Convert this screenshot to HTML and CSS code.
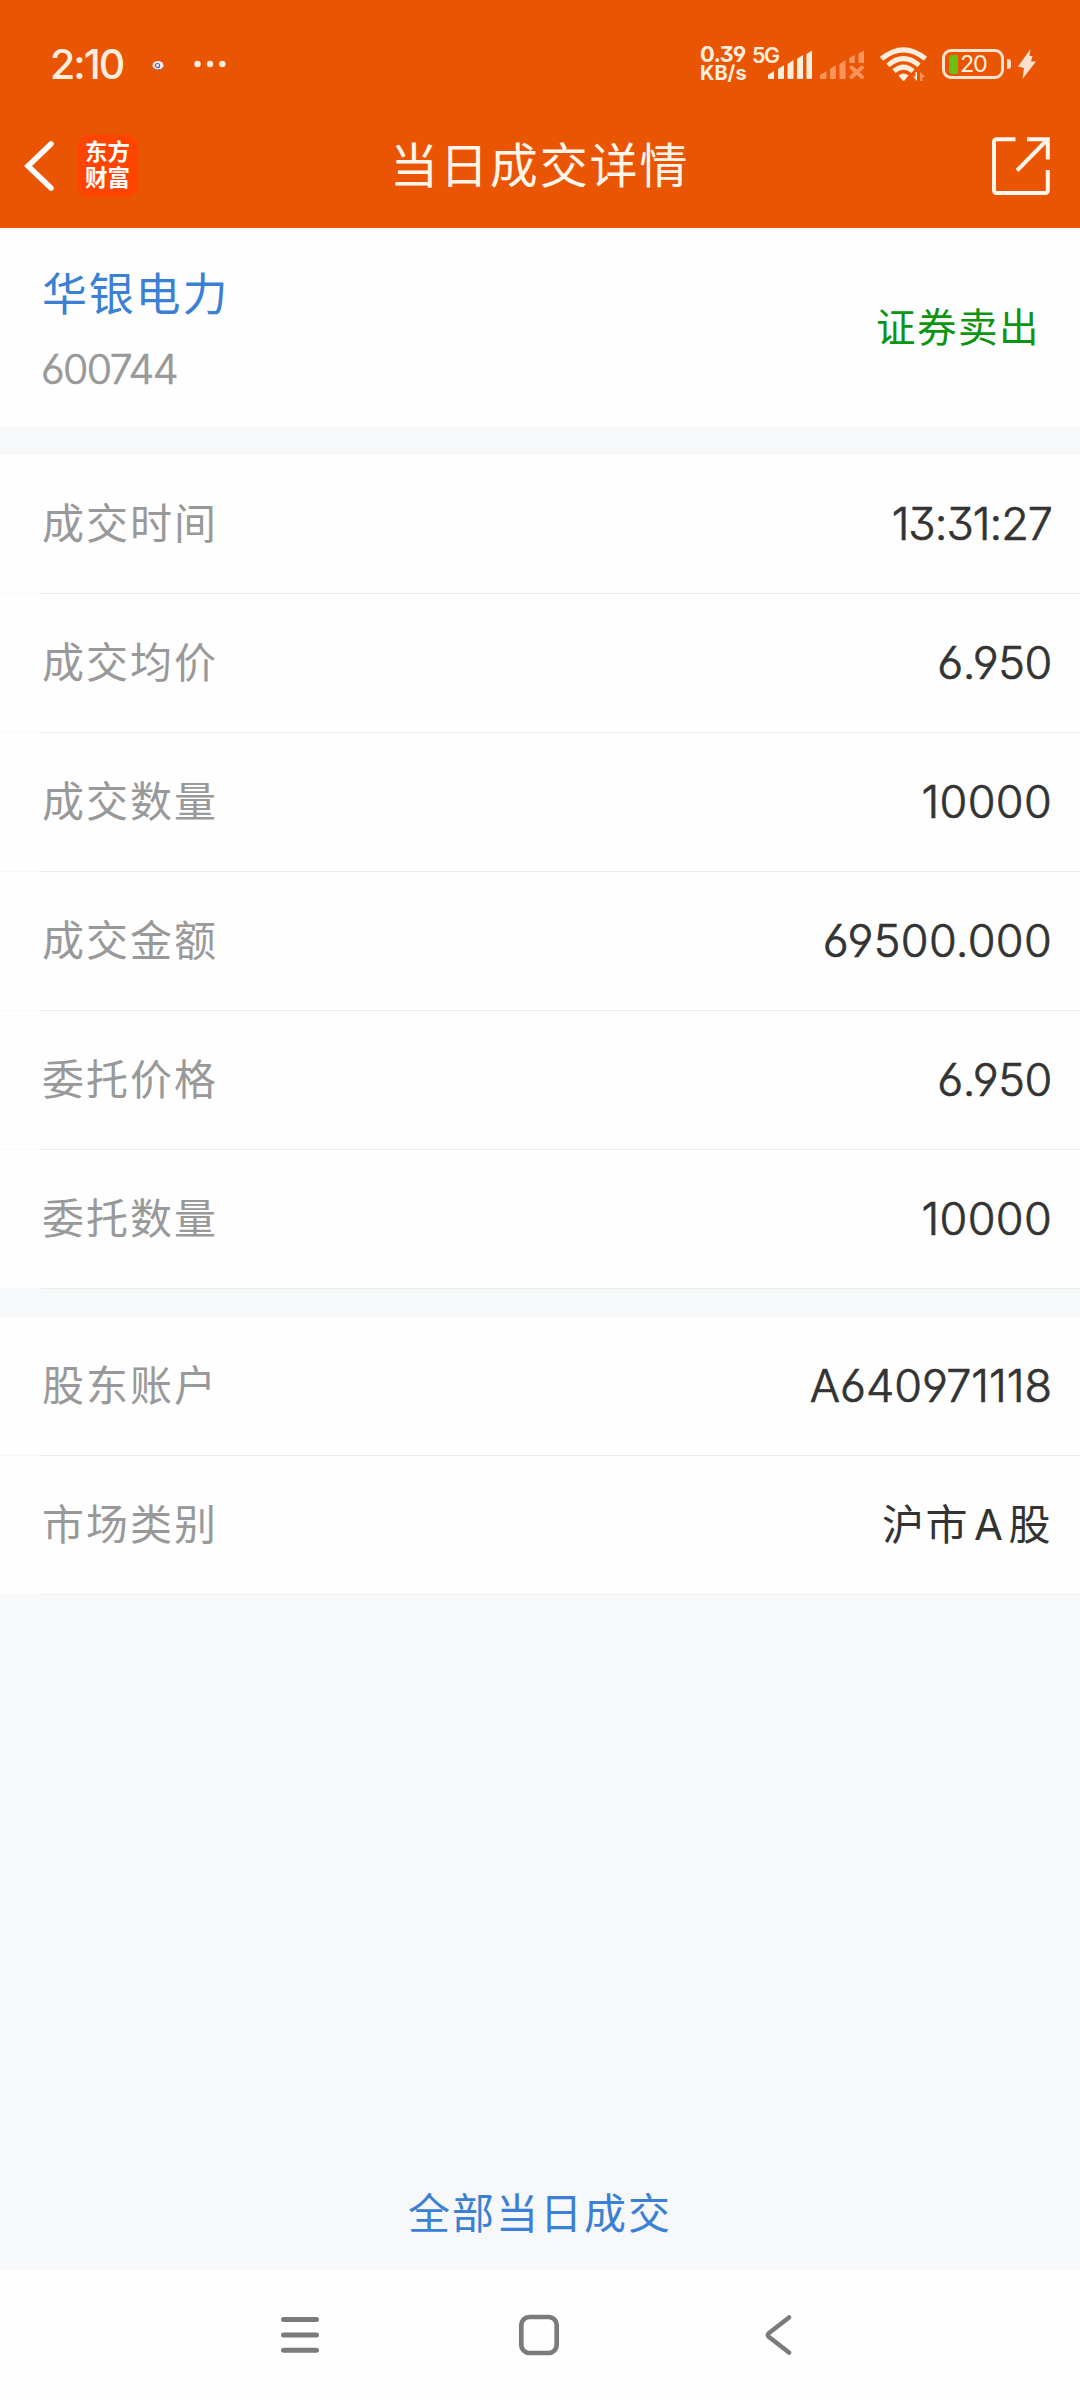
FILE: index.html
```html
<!DOCTYPE html>
<html lang="zh-CN">
<head>
<meta charset="utf-8">
<title>当日成交详情</title>
<link rel="stylesheet" href="styles.css">
</head>
<body>
<div class="screen">
  <header class="top">
    <div class="status">
      <div class="clock">2:10</div>
      <svg class="notif" width="80" height="24" viewBox="0 0 80 24">
        <ellipse cx="9" cy="13.5" rx="5.5" ry="4.5" fill="#efe6ee"/>
        <path d="M4 16q5 4 10 0" fill="none" stroke="#a05a6a" stroke-width="1"/>
        <circle cx="8.5" cy="13.5" r="2" fill="#fff" stroke="#5b5f93" stroke-width="1.2"/>
        <g fill="#ffeedd"><circle cx="48.5" cy="12" r="3.2"/><circle cx="61" cy="12" r="3.2"/><circle cx="73.3" cy="12" r="3.2"/></g>
      </svg>
      <div class="speed"><span class="rate">0.39</span><span class="unit">KB/s</span></div>
      <div class="cell">
        <span class="gen">5G</span>
        <svg width="100" height="36" viewBox="0 0 100 36">
          <g fill="#ffeedd">
            <path d="M0 32v-3l6-4v7q0 1-1 1h-4q-1 0-1-1z"/>
            <path d="M10 32v-9l6-4v13q0 1-1 1h-4q-1 0-1-1z"/>
            <path d="M19.500 32v-14l6-4v18q0 1-1 1h-4q-1 0-1-1z"/>
            <path d="M29 32v-19l6-4v23q0 1-1 1h-4q-1 0-1-1z"/>
            <path d="M38.500 32v-24l5.500-3.500v27.500q0 1-1 1h-3.500q-1 0-1-1z"/>
          </g>
          <g fill="#ff935c">
            <path d="M52 32v-3l6.500-4v7q0 1-1 1h-4.500q-1 0-1-1z"/>
            <path d="M62 32v-9l6-4v13q0 1-1 1h-4q-1 0-1-1z"/>
            <path d="M71.500 32v-14l6-4v18q0 1-1 1h-4q-1 0-1-1z"/>
            <path d="M81.300 17v-5l5.500-3v8z"/>
            <path d="M90.500 17v-9.500l5.500-3v12.500z"/>
          </g>
          <path d="M83.500 21.500l10.500 9.500M94 21.500l-10.500 9.500" stroke="#ff935c" stroke-width="4" stroke-linecap="round"/>
        </svg>
      </div>
      <svg class="wifi" width="48" height="36" viewBox="0 0 48 36">
        <g fill="none" stroke="#ffeedd" stroke-width="5">
          <path d="M1.500 12.800Q23.500 -5.200 45.500 12.800"/>
          <path d="M8 19.300Q23.500 6 39 19.300"/>
          <path d="M14 25.200Q23.500 17.200 33 25.200"/>
        </g>
        <path d="M18.500 29.500q5-4 10 0l-3.800 4.700q-1.200 1-2.400 0z" fill="#ffeedd"/>
        <path d="M37 26v9l-4-4.500h2.500V26z" fill="#ffeedd"/>
        <path d="M40 35v-9l5.500 5h-3v4z" fill="#ff935c"/>
      </svg>
      <div class="battery"><span class="level"></span><span class="pct">20</span></div>
      <span class="tip"></span>
      <svg class="bolt" width="20" height="32" viewBox="0 0 20 32"><path d="M13.500 1L1 18.500l6 1.500L5.500 31 19 13.500h-5L15.500 8h-3z" fill="#ffe0d0"/></svg>
    </div>
    <div class="bar">
      <svg class="back" width="34" height="54" viewBox="0 0 34 54"><path d="M29 5L6 27l23 22" fill="none" stroke="#fff" stroke-width="5.500" stroke-linecap="round" stroke-linejoin="miter"/></svg>
      <div class="logo"><span>东方</span><span>财富</span></div>
      <h1 class="title">当日成交详情</h1>
      <svg class="share" width="58" height="58" viewBox="0 0 58 58"><g fill="none" stroke="#fff5ea" stroke-width="4"><path d="M23.500 2.200H5q-3 0-3 3V53q0 3 3 3H53q2.800 0 2.800-3V33"/><path d="M35 2.200H55.800V22.500M54.500 3.500L25 33.500"/></g></svg>
    </div>
  </header>

  <section class="stock">
    <div class="id"><div class="name">华银电力</div><div class="code">600744</div></div>
    <div class="side">证券卖出</div>
  </section>

  <section class="group">
    <div class="row"><span class="label">成交时间</span><span class="value time">13:31:27</span></div>
    <div class="row"><span class="label">成交均价</span><span class="value price">6.950</span></div>
    <div class="row"><span class="label">成交数量</span><span class="value">10000</span></div>
    <div class="row"><span class="label">成交金额</span><span class="value">69500.000</span></div>
    <div class="row"><span class="label">委托价格</span><span class="value price">6.950</span></div>
    <div class="row"><span class="label">委托数量</span><span class="value">10000</span></div>
  </section>

  <section class="group">
    <div class="row"><span class="label">股东账户</span><span class="value account">A640971118</span></div>
    <div class="row"><span class="label">市场类别</span><span class="value market">沪市<span class="letter">A</span>股</span></div>
  </section>

  <a class="all">全部当日成交</a>

  <nav class="nav">
    <svg width="40" height="42" viewBox="0 0 40 42"><path d="M3.500 5.500h33M3.500 21h33M3.500 36.300h33" stroke="#7b7b7b" stroke-width="5" stroke-linecap="round"/></svg>
    <svg width="42" height="42" viewBox="0 0 42 42"><rect x="3.300" y="3" width="35.400" height="36" rx="8" fill="none" stroke="#7b7b7b" stroke-width="4.700"/></svg>
    <svg width="28" height="42" viewBox="0 0 28 42"><path d="M25 3.500L5 19q-2.500 2 0 4L25 38.500" fill="none" stroke="#7b7b7b" stroke-width="4.500" stroke-linecap="round"/></svg>
  </nav>
</div>
</body>
</html>
```
FILE: styles.css
```css
* { box-sizing: border-box; }
body {
  margin: 0;
  font-family: Inter, "Noto Sans CJK SC", sans-serif;
  font-feature-settings: "cv03", "cv04", "cv09";
}
svg { display: block; flex: none; }
.screen {
  width: 1080px;
  height: 2400px;
  display: flex;
  flex-direction: column;
  background: #f6f8fa;
  overflow: hidden;
}
.top { height: 228px; background: #ea5504; color: #fff5ea; }

.status {
  height: 104px;
  padding: 24px 42px 0 50px;
  display: flex;
  align-items: center;
  color: #ffeedd;
}
.clock { width: 99px; font-size: 41px; font-weight: 500; line-height: 44px; letter-spacing: -2px; }
.speed {
  margin-left: 471px;
  width: 68px;
  display: flex;
  flex-direction: column;
  align-items: flex-start;
  font-weight: 700;
  white-space: nowrap;
}
.rate { font-size: 22px; line-height: 19px; letter-spacing: -0.800px; }
.unit { font-size: 20px; line-height: 19px; }
.cell { position: relative; width: 112px; }
.gen {
  position: absolute;
  left: -16px;
  top: -1px;
  font-size: 21.500px;
  line-height: 20px;
  font-weight: 600;
  letter-spacing: -1.500px;
}
.wifi { width: 48px; }
.battery {
  margin-left: 14px;
  width: 62px;
  height: 30px;
  border: 3px solid #ffe3cf;
  border-radius: 9px;
  display: flex;
  align-items: center;
  padding-left: 4px;
}
.level { width: 9px; height: 19px; border-radius: 3px 0 0 3px; background: #6abe16; }
.pct { margin-left: 2px; font-size: 23.500px; line-height: 24px; letter-spacing: -1.300px; }
.tip { width: 4px; height: 10px; margin-left: 3px; border-radius: 0 3px 3px 0; background: #ffe3cf; }
.bolt { margin-left: 6px; }

.bar { height: 124px; padding: 0 30px 0 22px; display: flex; align-items: center; }
.logo {
  margin-left: 21px;
  width: 61px;
  height: 62px;
  border-radius: 13px;
  background: #ff4402;
  color: #fff;
  display: flex;
  flex-direction: column;
  align-items: center;
  justify-content: center;
  padding-bottom: 2px;
  font-size: 22.500px;
  font-weight: 700;
  line-height: 26px;
}
.title { flex: 1; margin: 0 0 0 252px; font-size: 48px; font-weight: 400; line-height: 60px; letter-spacing: 1.900px; }

.stock {
  height: 199px;
  padding: 0 40px 0 42px;
  background: #fefefe;
  display: flex;
  justify-content: space-between;
  align-items: center;
}
.id { padding-top: 6px; }
.name { font-size: 45px; line-height: 64px; letter-spacing: 1.800px; color: #3b80d4; }
.code {
  margin: 12px 0 0 -1px;
  font-size: 41px;
  font-weight: 300;
  line-height: 60px;
  letter-spacing: -1.600px;
  color: #999;
  -webkit-text-stroke: 0.700px #999;
}
.side { font-size: 39.500px; line-height: 60px; letter-spacing: 1.500px; color: #0d9410; }

.group { margin-top: 28px; }
.row {
  height: 139px;
  padding: 0 28px 2px 42px;
  display: flex;
  justify-content: space-between;
  align-items: center;
  background: linear-gradient(90deg, #f7f8f9 41px, #ebecec 41px) bottom / 100% 1px no-repeat, #fefefe;
}
.label { font-size: 42px; letter-spacing: 2px; line-height: 60px; color: #999; }
.value {
  font-size: 45px;
  font-weight: 300;
  line-height: 60px;
  letter-spacing: 0.300px;
  color: #333;
  -webkit-text-stroke: 0.700px #333;
}
.time { letter-spacing: -1px; }
.price { letter-spacing: -0.400px; }
.account { letter-spacing: 0; }
.market { font-size: 42px; font-weight: 400; letter-spacing: 1.500px; -webkit-text-stroke: 0; }
.letter { margin: 0 4px 0 5px; }

.all {
  margin-top: auto;
  height: 112px;
  text-align: center;
  font-size: 42px;
  line-height: 112px;
  letter-spacing: 2px;
  color: #3b80d4;
}
.nav { height: 130px; padding: 0 288px 0 280px; display: grid; grid-template-columns: 238px 1fr auto; align-items: center; background: #fefefe; }
```
